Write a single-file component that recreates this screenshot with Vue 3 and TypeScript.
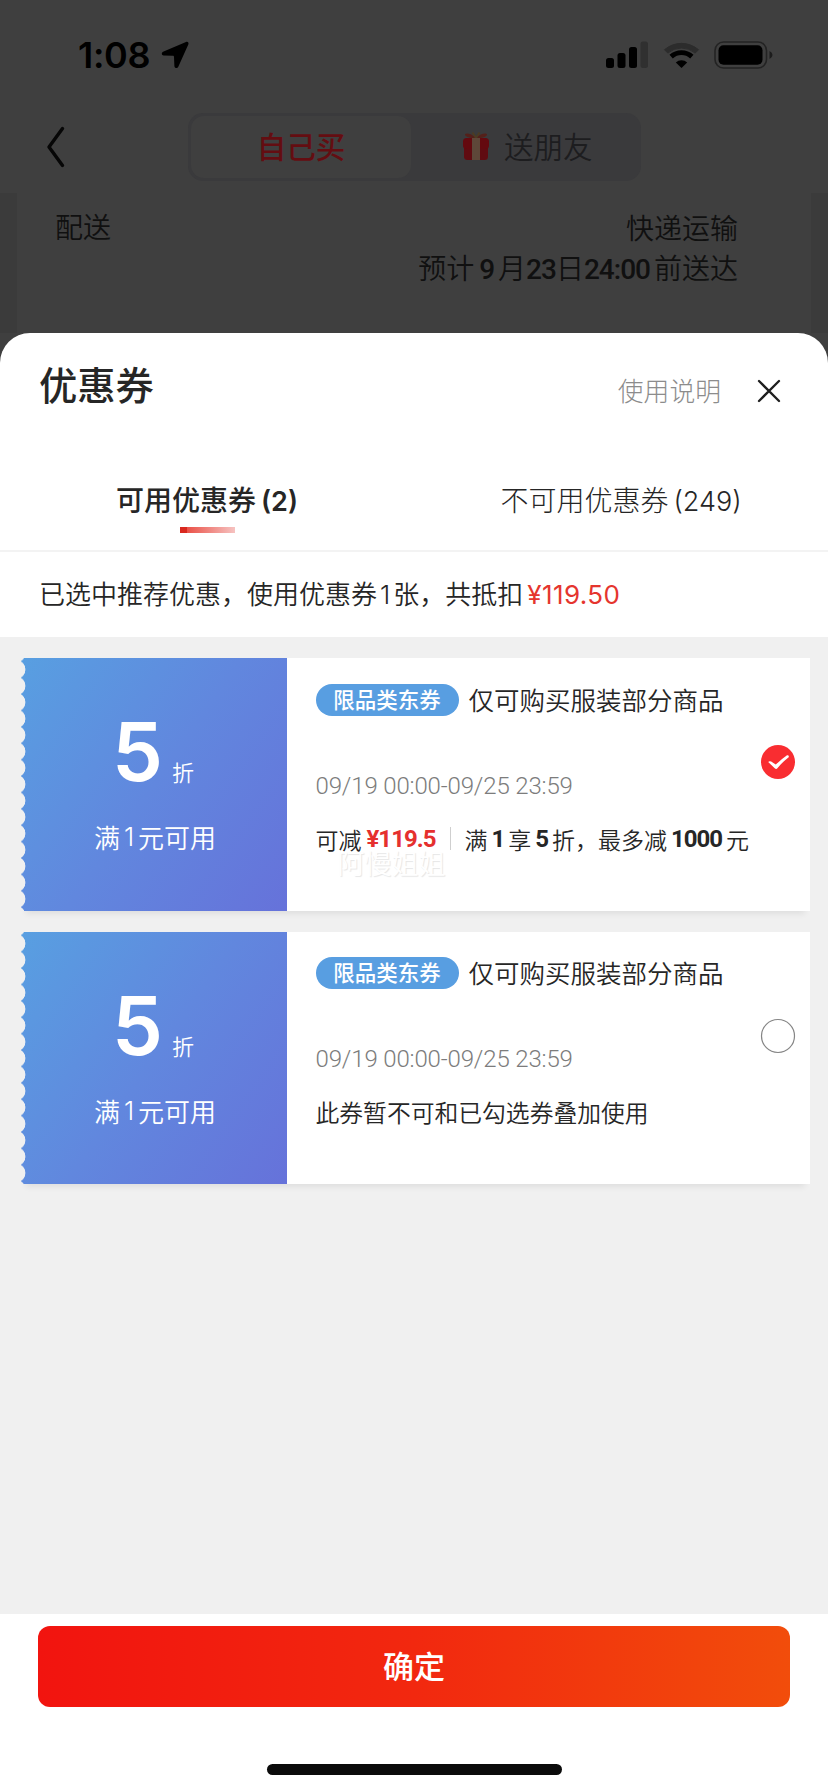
<script setup lang="ts">
import { ref } from 'vue'

interface Coupon {
  id: number
  discount: string
  condition: string
  tag: string
  title: string
  period: string
  note?: string
}

const coupons: Coupon[] = [
  {
    id: 1,
    discount: '5',
    condition: '满|1|元可用',
    tag: '限品类东券',
    title: '仅可购买服装部分商品',
    period: '09/19 00:00-09/25 23:59',
  },
  {
    id: 2,
    discount: '5',
    condition: '满|1|元可用',
    tag: '限品类东券',
    title: '仅可购买服装部分商品',
    period: '09/19 00:00-09/25 23:59',
    note: '此券暂不可和已勾选券叠加使用',
  },
]

const selected = ref(1)
</script>

<template>
  <div class="screen">
    <header class="status">
      <span class="clock">1:08</span>
      <svg class="locate" width="28" height="28" viewBox="0 0 28 28">
        <path d="M25 1 2 10.800C.2 11.700.500 14.300 2.600 14.500L11.800 14.800c.800 0 1.200.400 1.200 1.200L13.400 25c.2 2.600 3 2.800 4 .600L27.400 3.200C28 1.500 26.600.300 25 1Z" fill="#000" />
      </svg>
      <svg class="signals" width="170" height="30" viewBox="0 0 170 30">
        <rect x="2" y="18" width="8" height="10" rx="2.500" fill="#000" />
        <rect x="13.500" y="13" width="8" height="15" rx="2.500" fill="#000" />
        <rect x="25" y="7" width="8" height="21" rx="2.500" fill="#000" />
        <rect x="36.500" y="1.500" width="7.500" height="26.500" rx="2.500" fill="#303030" />
        <path d="M60.500 10.700 A26 26 0 0 1 94.500 10.700 L91.200 14.100 A21 21 0 0 0 63.800 14.100Z" transform="translate(0 -1)" fill="#2c2c2c" stroke="#2c2c2c" stroke-width="1" stroke-linejoin="round" />
        <path d="M65.500 14.800 A18 18 0 0 1 89.500 14.800 L86.200 18.400 A13 13 0 0 0 68.800 18.400Z" fill="#000" />
        <path d="M77.500 28 71.800 22.400 A8.500 8.500 0 0 1 83.200 22.400Z" fill="#000" />
        <rect x="111" y="2" width="51.500" height="26" rx="8.500" fill="none" stroke="#232323" stroke-width="1.600" />
        <rect x="114.500" y="5.300" width="44" height="19.500" rx="5" fill="#000" />
        <path d="M165.500 11 Q168.500 12.500 168.500 15 T165.500 19Z" fill="#1c1c1c" />
      </svg>
    </header>

    <nav class="nav">
      <svg class="back" width="20" height="44" viewBox="0 0 20 44">
        <path d="M16.500 3.500 3 22 16.500 40.500" fill="none" stroke="#060606" stroke-width="3.400" stroke-linecap="round" stroke-linejoin="round" />
      </svg>
      <div class="segment">
        <div class="segment-on">自己买</div>
        <div class="segment-off">
          <svg width="28" height="30" viewBox="0 0 28 30">
            <path d="M13.500 7C10 2.500 4 1.500 3 3.200 2.500 5 7 7.500 13.500 7ZM14.500 7C18 2.500 24 1.500 25 3.200 25.500 5 21 7.500 14.500 7Z" fill="#54201a" />
            <path d="M10.500 1.500 14 7 17.500 1.500" fill="none" stroke="#4c3b22" stroke-width="2" />
            <rect x="2" y="12" width="24" height="17" rx="3.500" fill="#600b11" />
            <rect x="1" y="7" width="26" height="11" rx="3.500" fill="#64090f" />
            <rect x="10" y="7" width="8" height="22" fill="#5e4739" />
          </svg>
          <span>送朋友</span>
        </div>
      </div>
    </nav>

    <section class="page">
      <div class="delivery">
        <span class="label">配送</span>
        <div class="values">
          <div>快递运输</div>
          <div class="eta">预计<b class="g1">9</b>月<b class="g2">23</b>日<b class="g3">24:00</b>前送达</div>
        </div>
      </div>
    </section>

    <main class="sheet">
      <div class="head">
        <h1>优惠券</h1>
        <span class="help">使用说明</span>
        <svg class="close" width="24" height="24" viewBox="0 0 24 24">
          <path d="M2 2 22 22M22 2 2 22" stroke="#1f1f1f" stroke-width="2.300" stroke-linecap="round" />
        </svg>
      </div>

      <div class="tabs">
        <div class="tab on">
          <div>可用优惠券<span class="count">(2)</span></div>
          <i class="bar"></i>
        </div>
        <div class="tab">
          <div>不可用优惠券<span class="count">(249)</span></div>
        </div>
      </div>

      <p class="summary">已选中推荐优惠，使用优惠券<span class="one">1</span>张，共抵扣<span class="sum">¥119.50</span></p>

      <div class="list">
        <article v-for="c in coupons" :key="c.id" class="coupon" @click="selected = c.id">
          <div class="face">
            <div class="worth"><strong>{{ c.discount }}</strong><span>折</span></div>
            <div class="cond"><span v-for="part in c.condition.split('|')" :key="part">{{ part }}</span></div>
          </div>
          <div class="info">
            <div class="title"><span class="tag">{{ c.tag }}</span><span class="name">{{ c.title }}</span></div>
            <div class="period">{{ c.period }}</div>
            <div v-if="c.note" class="rule note">{{ c.note }}</div>
            <div v-else class="rule">
              可减<b class="cut">¥119.5</b><i class="sep"></i>满<b class="d1">1</b>享<b class="d2">5</b>折，最多减<b class="d3">1000</b>元
            </div>
            <span v-if="!c.note" class="mark">阿慢姐姐</span>
          </div>
          <svg class="radio" width="36" height="36" viewBox="0 0 36 36">
            <template v-if="selected === c.id">
              <circle cx="18" cy="18" r="17" fill="#f92d31" />
              <path d="M8.200 18 Q9.500 16.600 11.200 17.600 L15.800 20.600 Q21 15.500 27 11.300 Q29.300 11 28.700 13.200 Q22.500 18 17.600 24 Q16.200 25.800 14.700 24.200Z" fill="#fff" />
            </template>
            <circle v-else cx="18" cy="18" r="16.500" fill="#fff" stroke="#858585" stroke-width="1.200" />
          </svg>
        </article>
      </div>

      <footer class="foot">
        <button class="confirm">确定</button>
        <div class="home"></div>
      </footer>
    </main>
  </div>
</template>

<style>
body {
  background: #3f3f3f;
}
</style>

<style scoped>
.screen {
  width: 828px;
  height: 1792px;
  overflow: hidden;
  display: flex;
  flex-direction: column;
  background: #3f3f3f;
  color: #262626;
  font-family: "Noto Sans CJK SC", sans-serif;
  font-weight: 350;
  white-space: nowrap;
}
.status {
  height: 113px;
  box-sizing: border-box;
  padding: 35px 54px 0 78px;
  display: flex;
  align-items: flex-start;
}
.clock {
  width: 83px;
  font: 600 36px/40px Inter, sans-serif;
  letter-spacing: -0.3px;
  color: #000;
}
.locate {
  margin-top: 6px;
}
.signals {
  margin: 5px 0 0 auto;
}
.nav {
  height: 80px;
  display: flex;
  align-items: flex-start;
}
.back {
  margin: 12px 0 0 46px;
}
.segment {
  box-sizing: border-box;
  width: 453px;
  height: 68px;
  margin-left: 122px;
  padding: 3px;
  border-radius: 15px;
  background: #3a3a3c;
  display: flex;
  font-size: 29.5px;
  line-height: 58px;
}
.segment-on {
  width: 220px;
  height: 62px;
  border-radius: 13px;
  background: #3f3f3f;
  color: #640d11;
  font-weight: 500;
  text-align: center;
}
.segment-off {
  display: flex;
  align-items: center;
  margin-left: 51px;
  color: #1d1d1f;
  height: 60px;
}
.segment-off span {
  margin: -2px 0 0 14px;
}
.page {
  height: 140px;
  flex: none;
  padding: 0 17px;
  background: #3b3b3b;
}
.delivery {
  height: 140px;
  box-sizing: border-box;
  padding: 14px 73px 0 38px;
  background: #3f3f3f;
  display: flex;
  justify-content: space-between;
  font-size: 28px;
  line-height: 40px;
  color: #101010;
}
.label {
  line-height: 38px;
}
.values {
  text-align: right;
}
.eta b {
  font: 500 28px/40px Roboto, sans-serif;
  letter-spacing: -1px;
}
.g1 {
  margin: 0 4px 0 5px;
}
.g3 {
  margin-right: 4px;
}
.sheet {
  flex: 1;
  display: flex;
  flex-direction: column;
  border-radius: 30px 30px 0 0;
  overflow: hidden;
  background: #fff;
}
.head {
  height: 120px;
  padding: 0 47px 0 39px;
  display: flex;
}
h1 {
  margin: 23px auto 0 0;
  font-size: 38.3px;
  line-height: 56px;
  font-weight: 500;
}
.help {
  margin-top: 38px;
  font-size: 25.8px;
  line-height: 38px;
  font-weight: 300;
  color: #8c8c8c;
}
.close {
  margin: 46px 0 0 36px;
}
.tabs {
  height: 97px;
  border-bottom: 2px solid #f3f3f3;
  display: grid;
  grid-template-columns: 1fr 1fr;
  font-size: 28px;
  line-height: 40px;
}
.tab {
  display: flex;
  flex-direction: column;
  align-items: center;
  padding-top: 26px;
  font-weight: 300;
}
.tab.on {
  font-weight: 500;
}
.count {
  font-family: Inter, sans-serif;
  font-size: 27px;
  margin-left: 5px;
}
.tab.on .count {
  font-weight: 600;
}
.bar {
  width: 55px;
  height: 6px;
  margin-top: 5px;
  background: linear-gradient(90deg, #d9281f 0 7px, #ea5148 7px, #f6c3c1);
}
.summary {
  margin: 0;
  height: 85px;
  padding-left: 39px;
  font-size: 26px;
  line-height: 82px;
}
.summary span {
  font-family: Inter, sans-serif;
  font-weight: 400;
  font-size: 26px;
}
.summary .one {
  margin: 0 3px 0 3px;
  font-weight: 350;
}
.summary .sum {
  margin-left: 4px;
  letter-spacing: 0.4px;
  color: #e5352e;
}
.list {
  flex: 1;
  padding: 21px 18px 0 21px;
  display: flex;
  flex-direction: column;
  gap: 21px;
  background: #f0f0f0;
}
.coupon {
  position: relative;
  display: flex;
  height: 252.5px;
  background: #fff;
  box-shadow: 0 8px 6px -5px rgba(0, 0, 0, 0.07);
}
.face {
  position: relative;
  width: 265.5px;
  background: linear-gradient(125deg, #589fe1, #6187de 50%, #6672da);
  color: #fff;
}
.face::before {
  content: "";
  position: absolute;
  left: 0;
  top: 0;
  width: 5px;
  height: 100%;
  background: radial-gradient(circle 9.700px at -5px 8.200px, #f0f0f0 94%, transparent) 0 3.300px / 5px 16.400px;
}
.worth {
  display: flex;
  align-items: baseline;
  padding: 44px 0 0 91px;
  height: 100px;
}
.worth strong {
  font: 600 81px/100px Inter, sans-serif;
  width: 60px;
}
.worth span {
  font-size: 22px;
}
.cond {
  display: flex;
  margin: 15px 0 0 73px;
  font-size: 26px;
  line-height: 40px;
}
.cond span:nth-child(2) {
  font-family: Inter, sans-serif;
  width: 18px;
  text-align: center;
}
.info {
  position: relative;
  padding-left: 29px;
}
.title {
  display: flex;
  align-items: center;
  margin-top: 25.500px;
  height: 32px;
}
.tag {
  width: 143px;
  height: 32px;
  border-radius: 16px;
  background: #589ee1;
  color: #fff;
  text-align: center;
  font-size: 21.500px;
  font-weight: 500;
  line-height: 30px;
}
.name {
  margin: -2px 0 0 10px;
  font-size: 25.500px;
  line-height: 32px;
}
.period {
  margin-top: 54px;
  font: 300 24px/32px Roboto, sans-serif;
  letter-spacing: -0.15px;
  color: #7c7c7c;
}
.rule {
  margin-top: 18px;
  display: flex;
  align-items: center;
  font-size: 23px;
  line-height: 38px;
}
.note {
  font-size: 23.800px;
}
.rule b {
  font: 700 24px/38px Roboto, sans-serif;
  letter-spacing: -1px;
}
.rule .cut {
  margin-left: 5px;
  color: #e5302e;
}
.sep {
  width: 1px;
  height: 23px;
  margin: 0 13px 0 15px;
  background: #cfcfcf;
}
.d1,
.d2,
.d3 {
  margin: 0 4px;
}
.mark {
  position: absolute;
  left: 51px;
  top: 185px;
  font-size: 27px;
  line-height: 40px;
  color: #fff;
  text-shadow: 1px 1px 1px rgba(0, 0, 0, 0.1);
}
.radio {
  position: absolute;
  right: 14.500px;
  top: 86px;
}
.foot {
  height: 178px;
  display: flex;
  flex-direction: column;
  align-items: center;
}
.confirm {
  width: 752px;
  height: 81px;
  margin: 12px 0 57px;
  padding: 0 0 4px;
  border: 0;
  border-radius: 12px;
  background: linear-gradient(90deg, #f2140f, #f2280f 50%, #f24d0b);
  color: #fff;
  font: 500 31px/77px "Noto Sans CJK SC", sans-serif;
}
.home {
  width: 295px;
  height: 11px;
  border-radius: 6px;
  background: #0b0b0b;
}
</style>
